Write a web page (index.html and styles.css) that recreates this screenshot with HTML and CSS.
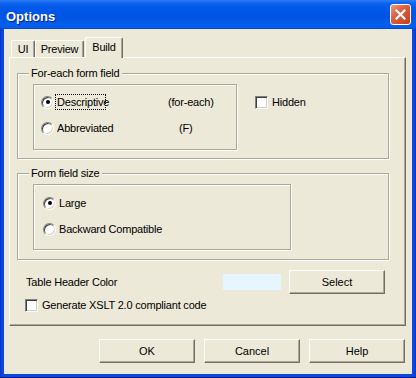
FILE: index.html
```html
<!DOCTYPE html>
<html lang="en">
  <head>
    <meta charset="UTF-8" />
    <title>Options</title>
    <link rel="stylesheet" href="styles.css">
  </head>
  <body>
    <div class="window">
      <div class="titlebar">
        <span class="title">Options</span>
        <button class="close-btn" aria-label="Close">
          <svg width="11" height="11" viewBox="0 0 11 11">
            <path d="M1.5 1.5 L9.5 9.5 M9.5 1.5 L1.5 9.5" stroke="#fff" stroke-width="2.2" stroke-linecap="square" />
          </svg>
        </button>
      </div>

      <div class="client">
        <div class="tabs">
          <span class="tab tab-ui">UI</span>
          <span class="tab tab-preview">Preview</span>
          <span class="tab tab-build active">Build</span>
        </div>

        <div class="tab-page">
          <fieldset class="group group-foreach">
            <legend>For-each form field</legend>
            <div class="group-row">
              <div class="radio-box">
                <label class="option">
                  <span class="radio checked"><span class="dot"></span></span>
                  <span class="option-text focused">Descriptive</span>
                  <span class="hint">(for-each)</span>
                </label>
                <label class="option">
                  <span class="radio"></span>
                  <span class="option-text">Abbreviated</span>
                  <span class="hint hint-short">(F)</span>
                </label>
              </div>
              <label class="check check-hidden">
                <span class="box"></span>
                Hidden
              </label>
            </div>
          </fieldset>

          <fieldset class="group group-size">
            <legend>Form field size</legend>
            <div class="radio-box radio-box-wide">
              <label class="option">
                <span class="radio checked"><span class="dot"></span></span>
                <span class="option-text">Large</span>
              </label>
              <label class="option">
                <span class="radio"></span>
                <span class="option-text">Backward Compatible</span>
              </label>
            </div>
          </fieldset>

          <div class="color-row">
            <span class="color-label">Table Header Color</span>
            <span class="swatch"></span>
            <button class="btn">Select</button>
          </div>

          <label class="check check-xslt">
            <span class="box"></span>
            Generate XSLT 2.0 compliant code
          </label>
        </div>

        <div class="buttons">
          <button class="btn">OK</button>
          <button class="btn">Cancel</button>
          <button class="btn">Help</button>
        </div>
      </div>
    </div>
  </body>
</html>
```

FILE: styles.css
```css
* {
  box-sizing: border-box;
}

body {
  margin: 0;
  font-family: "Liberation Sans", Tahoma, sans-serif;
  font-size: 11px;
  letter-spacing: -0.2px;
  color: #000;
  background: #0a3cd8;
}

.window {
  width: 416px;
  height: 378px;
  display: flex;
  flex-direction: column;
  background: linear-gradient(90deg, #0831c8, #0a48e0 2px, #0a48e0 calc(100% - 2px), #0831c8);
  box-shadow: inset 0 -1px #00138c;
}

.titlebar {
  height: 29px;
  flex-shrink: 0;
  display: flex;
  align-items: center;
  justify-content: space-between;
  padding: 0 5px 0 6px;
  background: linear-gradient(
    to bottom,
    #2d7df7 0%,
    #0a62ee 12%,
    #0057e8 35%,
    #0054e3 60%,
    #0260ee 85%,
    #0a5ae6 95%,
    #0044cf 100%
  );
}

.title {
  color: #fff;
  font-weight: bold;
  font-size: 13px;
  letter-spacing: 0;
  margin-top: 3px;
  text-shadow: 1px 1px #0a1f8c;
}

.close-btn {
  width: 21px;
  height: 21px;
  padding: 0;
  border: 1px solid #fff;
  border-radius: 3px;
  background: linear-gradient(135deg, #ec9a80, #dc6040 40%, #c93c16);
  display: flex;
  align-items: center;
  justify-content: center;
}

.client {
  flex: 1;
  margin: 0 4px 4px;
  background: #ece9d8;
  padding-top: 8px;
}

/* tabs */

.tabs {
  display: flex;
  align-items: flex-end;
  height: 21px;
  margin-left: 7px;
  margin-bottom: -1px;
  position: relative;
  z-index: 1;
}

.tab {
  height: 17px;
  margin-bottom: 1px;
  border: 1px solid;
  border-color: #fff #716f64 transparent #fff;
  border-bottom: none;
  border-radius: 2px 2px 0 0;
  box-shadow: inset -1px 0 #aca899;
  display: flex;
  align-items: center;
  justify-content: center;
  background: #ece9d8;
}

.tab-ui {
  width: 24px;
}

.tab-preview {
  width: 49px;
}

.tab-build {
  width: 38px;
  margin-left: 1px;
}

.tab.active {
  height: 21px;
  margin-bottom: 0;
  padding-bottom: 2px;
}

.tab-page {
  width: 397px;
  height: 269px;
  margin-left: 5px;
  border: 1px solid;
  border-color: #fff #716f64 #716f64 #fff;
  box-shadow: inset -1px -1px #aca899;
  padding: 9px 7px 0;
}

/* group boxes */

.group {
  margin: 0;
  width: 372px;
  min-width: 0;
  border: 1px solid #aca899;
  box-shadow: inset 1px 1px #fff, 1px 1px #fff;
  padding: 4px 0 8px 15px;
}

.group legend {
  padding: 0 2px;
  margin-left: -4px;
  line-height: 13px;
  background: #ece9d8;
}

.group-size {
  margin-top: 8px;
  padding-bottom: 9px;
}

.group-row {
  display: flex;
  align-items: flex-start;
}

.radio-box {
  width: 204px;
  height: 66px;
  border: 1px solid #aca899;
  box-shadow: inset 1px 1px #fff, 1px 1px #fff;
  padding: 9px 0 0 7px;
  display: flex;
  flex-direction: column;
  gap: 10px;
}

.radio-box-wide {
  width: 258px;
  padding-top: 10px;
  padding-left: 9px;
}

.option {
  height: 16px;
  display: flex;
  align-items: center;
}

.radio {
  width: 13px;
  height: 13px;
  border-radius: 50%;
  border: 1px solid;
  border-color: #808080 #fff #fff #808080;
  box-shadow: inset 1px 1px #404040, inset -1px -1px #d4d0c8;
  background: #fff;
  margin-right: 1px;
  display: flex;
  align-items: center;
  justify-content: center;
}

.dot {
  width: 4px;
  height: 4px;
  border-radius: 50%;
  background: #000;
}

.option-text {
  height: 16px;
  line-height: 14px;
  padding: 0 1px;
  border: 1px dotted transparent;
  width: 113px;
  white-space: nowrap;
}

.option-text.focused {
  border-color: #000;
  width: 51px;
  margin-right: 62px;
}

.hint-short {
  margin-left: 11px;
}

.check {
  height: 16px;
  display: flex;
  align-items: center;
  gap: 4px;
}

.box {
  width: 13px;
  height: 13px;
  border: 1px solid;
  border-color: #808080 #fff #fff #808080;
  box-shadow: inset 1px 1px #404040, inset -1px -1px #d4d0c8;
  background: #fff;
}

.check-hidden {
  margin-left: 18px;
  margin-top: 10px;
}

/* colour row */

.color-row {
  height: 24px;
  margin-top: 10px;
  padding-left: 9px;
  display: flex;
  align-items: center;
}

.color-label {
  width: 197px;
}

.swatch {
  width: 58px;
  height: 16px;
  background: #e6f5ff;
  margin-right: 8px;
}

.check-xslt {
  margin-top: 3px;
  margin-left: 8px;
}

/* buttons */

.btn {
  width: 96px;
  height: 24px;
  padding: 0;
  border: 1px solid;
  border-color: #fff #716f64 #716f64 #fff;
  box-shadow: inset -1px -1px #aca899;
  background: #ece9d8;
  font: inherit;
  color: #000;
}

.buttons {
  display: flex;
  justify-content: flex-end;
  gap: 9px;
  margin-top: 13px;
  padding-right: 7px;
}
```
